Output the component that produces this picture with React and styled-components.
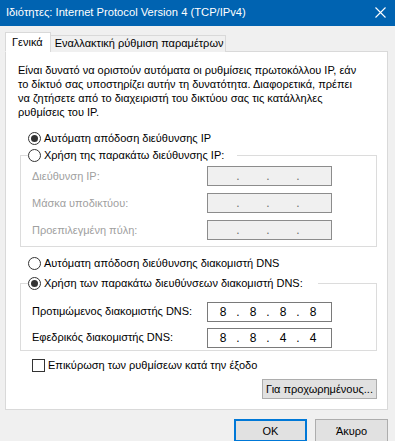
import React from 'react'
import styled, { createGlobalStyle } from 'styled-components'

const FONT = `"Liberation Sans", "Noto Sans", sans-serif`

const GlobalStyle = createGlobalStyle`
  html, body {
    margin: 0;
    padding: 0;
  }
  body {
    background: #f0f0f0;
    font-family: ${FONT};
    font-size: 11px;
    color: #000;
  }
`

const Window = styled.div`
  width: 395px;
  height: 441px;
  overflow: hidden;
  display: flex;
  flex-direction: column;
  background: #f0f0f0;
`

const TitleBar = styled.div`
  height: 26px;
  flex-shrink: 0;
  background: #0063b1;
  color: #fff;
  display: flex;
  align-items: center;
  justify-content: space-between;
  padding: 0 9px 2px 6px;
  box-sizing: border-box;
  font-size: 11.2px;
`

const CloseIcon = () => (
  <svg width="11" height="11" viewBox="0 0 11 11">
    <path d="M0.5 0.5 L10.5 10.5 M10.5 0.5 L0.5 10.5" stroke="#fff" strokeWidth="1.1" />
  </svg>
)

const Body = styled.div`
  padding: 6px 7px 0 5px;
  display: flex;
  flex-direction: column;
`

const Tabs = styled.div`
  display: flex;
  align-items: flex-end;
  height: 20px;
  position: relative;
  z-index: 1;
  margin-bottom: -1px;
`

const Tab = styled.div`
  box-sizing: border-box;
  border: 1px solid #d9d9d9;
  border-bottom: ${p => (p.$active ? '1px solid #fff' : 'none')};
  background: ${p => (p.$active ? '#fff' : '#f0f0f0')};
  height: ${p => (p.$active ? '20px' : '17px')};
  padding: ${p => (p.$active ? '3px 7px 0 6px' : '1px 2px 0 4px')};
  margin-left: ${p => (p.$active ? '0' : '-1px')};
  white-space: nowrap;
`

const Panel = styled.div`
  box-sizing: border-box;
  height: 359px;
  background: #fff;
  border: 1px solid #d9d9d9;
  padding: 11px 10px 0 12px;
  display: flex;
  flex-direction: column;
`

const Intro = styled.p`
  margin: 0;
  line-height: 14px;
  white-space: nowrap;
`

const OptionRow = styled.label`
  display: flex;
  align-items: center;
  gap: 3px;
  height: 16px;
  margin-top: ${p => p.$top || 0}px;
  margin-left: ${p => p.$indent || 10}px;
  white-space: nowrap;
`

const RadioMark = styled.span`
  width: 13px;
  height: 13px;
  box-sizing: border-box;
  border: 1px solid #333;
  border-radius: 50%;
  background: #fff;
  display: inline-flex;
  align-items: center;
  justify-content: center;
  flex-shrink: 0;

  &::after {
    content: '';
    width: 7px;
    height: 7px;
    border-radius: 50%;
    background: ${p => (p.$checked ? '#333' : 'transparent')};
  }
`

const CheckMark = styled.span`
  width: 13px;
  height: 13px;
  box-sizing: border-box;
  border: 1px solid #333;
  background: #fff;
  flex-shrink: 0;
`

const Group = styled.fieldset`
  margin: ${p => p.$top || 0}px 0 0 2px;
  padding: ${p => p.$padTop || 0}px 0 ${p => p.$padBottom || 0}px 0;
  border: 1px solid #dcdcdc;
  min-width: 0;
  display: flex;
  flex-direction: column;
  gap: ${p => p.$gap || 6}px;
`

const Legend = styled.legend`
  margin-left: 7px;
  padding: 0;
  width: ${p => p.$width}px;
  box-sizing: border-box;
`

const LegendInner = styled.span`
  display: flex;
  align-items: center;
  gap: 3px;
  height: 16px;
  white-space: nowrap;
  background: #fff;
`

const FieldRow = styled.div`
  display: flex;
  align-items: center;
  height: 20px;
  padding-left: 11px;
`

const FieldLabel = styled.span`
  width: 175px;
  color: ${p => (p.$disabled ? '#a0a0a0' : '#000')};
  white-space: nowrap;
  margin-top: ${p => (p.$lift ? '-3px' : '0')};
`

const IpBox = styled.div`
  box-sizing: border-box;
  width: 125px;
  height: 20px;
  border: 1px solid ${p => (p.$disabled ? '#8c8c8c' : '#7a7a7a')};
  background: ${p => (p.$disabled ? '#f0f0f0' : '#fff')};
  display: flex;
  align-items: center;
  padding-left: 3px;
  font-size: 12px;
  color: ${p => (p.$disabled ? '#a0a0a0' : '#000')};
`

const Octet = styled.span`
  width: 24px;
  text-align: center;
`

const Dot = styled.span`
  width: 6px;
  text-align: center;
  color: ${p => (p.$disabled ? '#6d6d6d' : '#000')};
`

const IpField = ({ value, disabled }) => {
  const parts = value ? value.split('.') : ['', '', '', '']
  return (
    <IpBox $disabled={disabled}>
      {parts.map((part, i) => (
        <React.Fragment key={i}>
          {i > 0 && <Dot $disabled={disabled}>.</Dot>}
          <Octet>{part}</Octet>
        </React.Fragment>
      ))}
    </IpBox>
  )
}

const PanelFooter = styled.div`
  display: flex;
  justify-content: flex-end;
  margin-top: 6px;
`

const Button = styled.button`
  font-family: ${FONT};
  font-size: 11px;
  color: #000;
  box-sizing: border-box;
  background: #e1e1e1;
  border: ${p => (p.$default ? '2px solid #0078d7' : '1px solid #adadad')};
  height: ${p => p.$height || 23}px;
  width: ${p => p.$width}px;
  padding: 0;
  margin: 0;
  white-space: nowrap;
`

const DialogButtons = styled.div`
  display: flex;
  justify-content: flex-end;
  gap: 8px;
  margin-top: 9px;
`

export default function App() {
  return (
    <>
      <GlobalStyle />
      <Window>
        <TitleBar>
          <span>Ιδιότητες: Internet Protocol Version 4 (TCP/IPv4)</span>
          <CloseIcon />
        </TitleBar>
        <Body>
          <Tabs>
            <Tab $active>Γενικά</Tab>
            <Tab>Εναλλακτική ρύθμιση παραμέτρων</Tab>
          </Tabs>
          <Panel>
            <Intro>
              Είναι δυνατό να οριστούν αυτόματα οι ρυθμίσεις πρωτοκόλλου IP, εάν
              <br />
              το δίκτυό σας υποστηρίζει αυτήν τη δυνατότητα. Διαφορετικά, πρέπει
              <br />
              να ζητήσετε από το διαχειριστή του δικτύου σας τις κατάλληλες
              <br />
              ρυθμίσεις του IP.
            </Intro>
            <OptionRow $top={11}>
              <RadioMark $checked />
              Αυτόματη απόδοση διεύθυνσης IP
            </OptionRow>
            <Group $top={1} $padTop={3} $padBottom={6} $gap={7}>
              <Legend $width={209}>
                <LegendInner>
                  <RadioMark />
                  Χρήση της παρακάτω διεύθυνσης IP:
                </LegendInner>
              </Legend>
              <FieldRow>
                <FieldLabel $disabled>Διεύθυνση IP:</FieldLabel>
                <IpField disabled />
              </FieldRow>
              <FieldRow>
                <FieldLabel $disabled>Μάσκα υποδικτύου:</FieldLabel>
                <IpField disabled />
              </FieldRow>
              <FieldRow>
                <FieldLabel $disabled>Προεπιλεγμένη πύλη:</FieldLabel>
                <IpField disabled />
              </FieldRow>
            </Group>
            <OptionRow $top={8}>
              <RadioMark />
              Αυτόματη απόδοση διεύθυνσης διακομιστή DNS
            </OptionRow>
            <Group $top={4} $padTop={11} $padBottom={2} $gap={6}>
              <Legend $width={290}>
                <LegendInner>
                  <RadioMark $checked />
                  Χρήση των παρακάτω διευθύνσεων διακομιστή DNS:
                </LegendInner>
              </Legend>
              <FieldRow>
                <FieldLabel $lift>Προτιμώμενος διακομιστής DNS:</FieldLabel>
                <IpField value="8.8.8.8" />
              </FieldRow>
              <FieldRow>
                <FieldLabel $lift>Εφεδρικός διακομιστής DNS:</FieldLabel>
                <IpField value="8.8.4.4" />
              </FieldRow>
            </Group>
            <OptionRow $top={6} $indent={14}>
              <CheckMark />
              Επικύρωση των ρυθμίσεων κατά την έξοδο
            </OptionRow>
            <PanelFooter>
              <Button $width={115} $height={20}>Για προχωρημένους...</Button>
            </PanelFooter>
          </Panel>
          <DialogButtons>
            <Button $default $width={73}>OK</Button>
            <Button $width={73}>Άκυρο</Button>
          </DialogButtons>
        </Body>
      </Window>
    </>
  )
}
